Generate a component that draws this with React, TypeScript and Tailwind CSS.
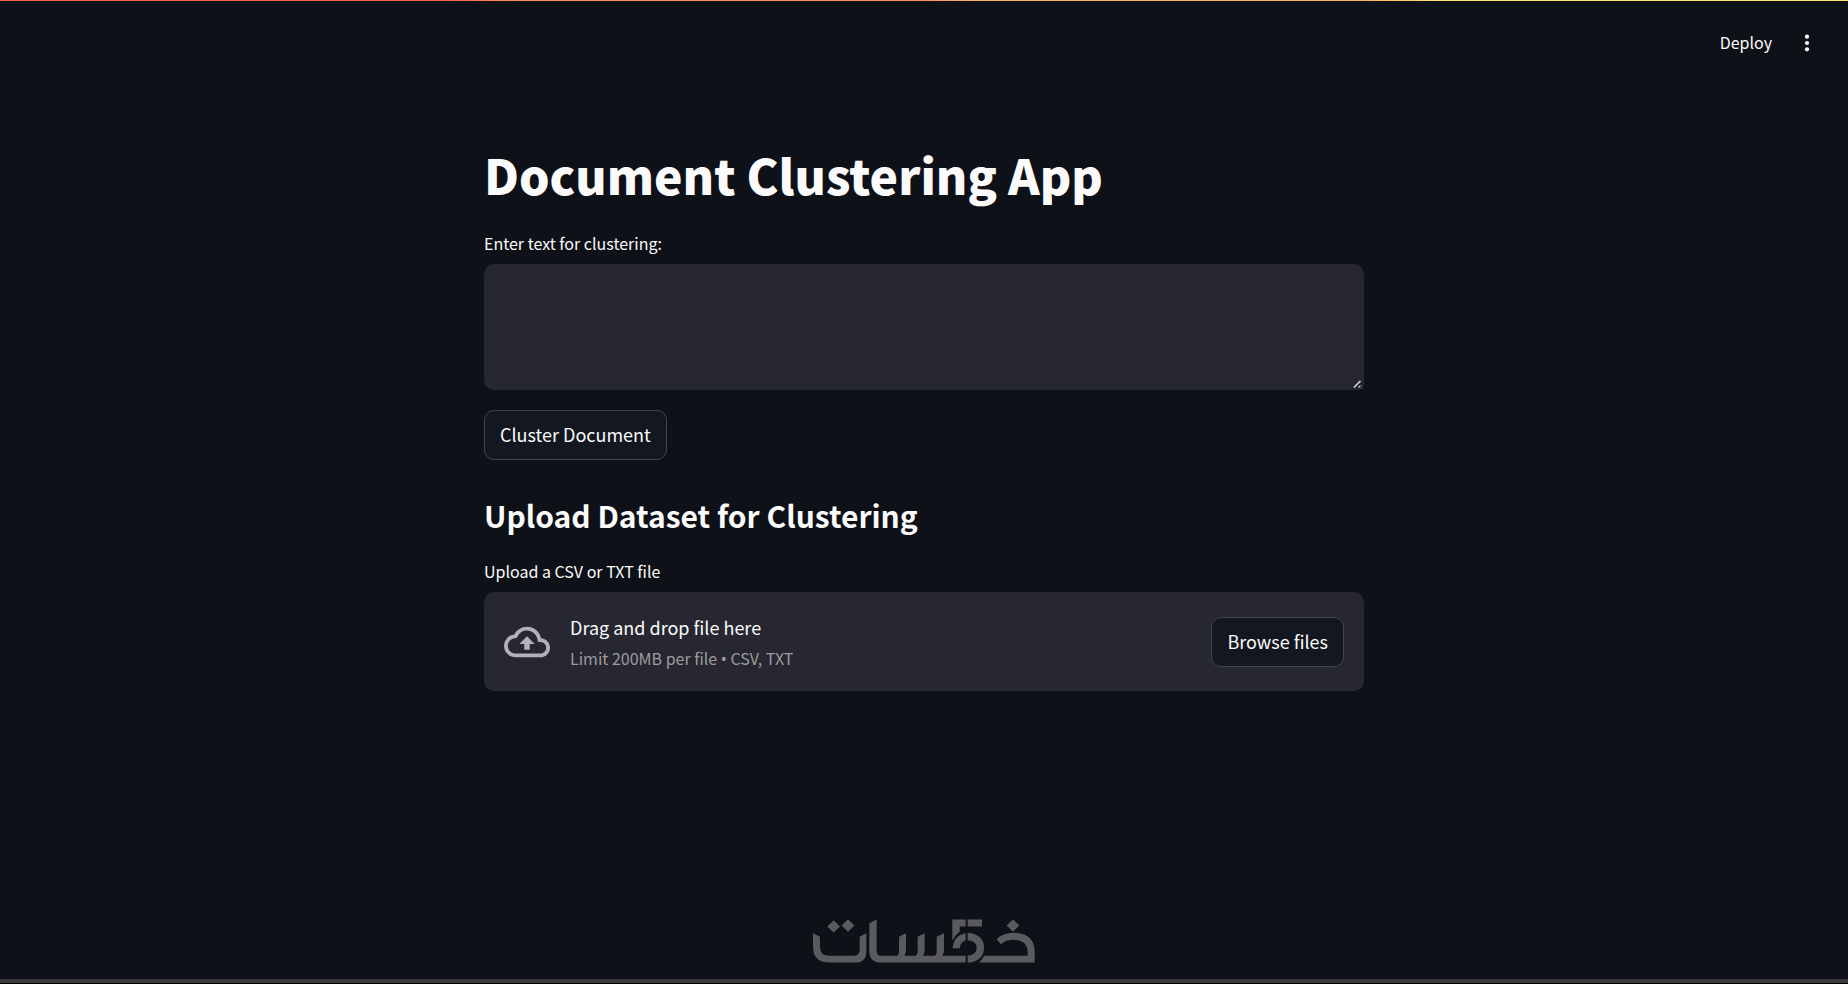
import { useState } from "react";

function MenuIcon() {
  return (
    <svg viewBox="0 0 24 24" className="size-6" fill="currentColor" aria-hidden="true">
      <circle cx="12" cy="5.7" r="2.1" />
      <circle cx="12" cy="12" r="2.1" />
      <circle cx="12" cy="18.3" r="2.1" />
    </svg>
  );
}

function CloudUploadIcon() {
  return (
    <svg viewBox="0 0 24 24" className="size-[46px] shrink-0" fill="currentColor" aria-hidden="true">
      <path d="M19.35 10.04A7.49 7.49 0 0 0 12 4C9.11 4 6.6 5.64 5.35 8.04A5.994 5.994 0 0 0 0 14c0 3.31 2.69 6 6 6h13c2.76 0 5-2.24 5-5 0-2.64-2.05-4.78-4.65-4.96zM19 18H6c-2.21 0-4-1.79-4-4 0-2.05 1.53-3.76 3.56-3.97l1.07-.11.5-.95A5.469 5.469 0 0 1 12 6c2.62 0 4.88 1.86 5.39 4.43l.3 1.5 1.53.11A2.98 2.98 0 0 1 22 15c0 1.65-1.35 3-3 3zM8 13h2.55v3h2.9v-3H16l-4-4z" />
    </svg>
  );
}

function ResizeGrip() {
  return (
    <svg
      viewBox="0 0 12 12"
      className="pointer-events-none absolute right-0 bottom-0 size-3"
      fill="none"
      aria-hidden="true"
    >
      <path d="M0 12V0h12v5q0 7-7 7z" fill="#262730" />
      <path d="M1 9L8 2" stroke="#0e1117" strokeWidth="1.5" />
      <path d="M2 9.5L8.5 3" stroke="#c4c4c8" strokeWidth="2" />
      <path d="M4 10L9 5" stroke="#0e1117" strokeWidth="1.5" />
      <path d="M6.5 9.5L8.5 7.5" stroke="#c4c4c8" strokeWidth="1.2" />
    </svg>
  );
}

function KhamsatLogo() {
  return (
    <svg viewBox="39 58 666 131" className="h-[44px] w-[222px]" fill="currentColor" role="img" aria-label="خمسات">
      <path d="M101 61l19 19-19 18-19-18zM144 58l19 19-19 19-19-19z" />
      <path d="M39 100l21 11v30q0 27 28 27h71q20 0 20-18v-39l20-11v54q0 34-33 34H88q-49 0-49-48z" />
      <path d="M208 70l22-12v96q0 14 15 14h42q10 0 10-14v-43l21-11v50q0 10-5 18h34q6-3 6-14v-43l21-11v50q0 10-5 18h34q7-3 7-14v-43l22-11v50q0 10-5 18h70v20H244q-36 0-36-34z" />
      <path d="M457 59h40v21h-18v16q-14 9-22 26zM503 59h43v21h-43z" />
      <path d="M497 100v21q-16 5-18 24h-21q2-38 39-45zM503 99q49 5 49 45t-49 45v-21q27-3 27-24t-27-23z" />
      <path d="M639 58l19 19-19 19-19-19z" />
      <path d="M537 188q10-8 15-20h131v-10q0-38-43-38-22 0-37 13l-13-14q18-20 50-20 64 0 64 57v32z" />
    </svg>
  );
}

const outlined =
  "h-[50px] cursor-pointer rounded-[10px] border border-[#42454b] bg-[#131720] px-[15px] pb-0.5 text-lg leading-6 text-[#fafafa] hover:border-[#ff4b4b] hover:text-[#ff4b4b]";

export default function App() {
  const [text, setText] = useState("");

  return (
    <div className="flex min-h-screen flex-col bg-[#0e1117] font-['Source_Sans_Pro','Noto_Sans_CJK_SC',sans-serif] text-[#fafafa] scheme-dark">
      <div className="h-px bg-[linear-gradient(90deg,#ff6052_24%,#fb9060_28%,#fb9060_50%,#f9b566_53%,#f9b566_74%,#fde478_78%)]" />
      <header className="flex h-[84px] items-center justify-end gap-[23px] pr-[29px]">
        <button type="button" className="cursor-pointer pb-0.5 text-base leading-6">
          Deploy
        </button>
        <button type="button" aria-label="Main menu" className="cursor-pointer">
          <MenuIcon />
        </button>
      </header>

      <main className="mx-auto flex w-full max-w-[880px] grow flex-col pt-14">
        <h1 className="text-[48px] leading-[66px] font-black">Document Clustering App</h1>

        <label htmlFor="cluster-text" className="mt-6 text-base leading-6">
          Enter text for clustering:
        </label>
        <div className="relative mt-[9px] flex">
          <textarea
            id="cluster-text"
            value={text}
            onChange={(e) => setText(e.target.value)}
            className="h-[126px] w-full resize-y rounded-[10px] bg-[#262730] p-5 text-lg outline-none"
          />
          <ResizeGrip />
        </div>

        <button type="button" className={`mt-5 self-start ${outlined}`}>
          Cluster Document
        </button>

        <h2 className="mt-[33px] text-[30px] leading-[44px] font-semibold">Upload Dataset for Clustering</h2>

        <p id="upload-label" className="mt-[22px] text-base leading-6">
          Upload a CSV or TXT file
        </p>
        <section
          aria-labelledby="upload-label"
          className="mt-[9px] flex items-center gap-5 rounded-[10px] bg-[#262730] p-5"
        >
          <span className="text-[#b0b1bd]">
            <CloudUploadIcon />
          </span>
          <div className="flex grow flex-col gap-1">
            <span className="text-lg leading-[30px]">Drag and drop file here</span>
            <span className="text-base leading-6 text-[#9c9c9f]">
              Limit 200MB per file <span className="font-['Noto_Sans',sans-serif]">•</span> CSV, TXT
            </span>
          </div>
          <button type="button" className={outlined}>
            Browse files
          </button>
        </section>
      </main>

      <footer className="flex flex-col items-center text-[#5a5b5e]">
        <KhamsatLogo />
        <div className="mt-4 h-[5px] w-full border-b border-black bg-[#3b3b3b]" />
      </footer>
    </div>
  );
}
